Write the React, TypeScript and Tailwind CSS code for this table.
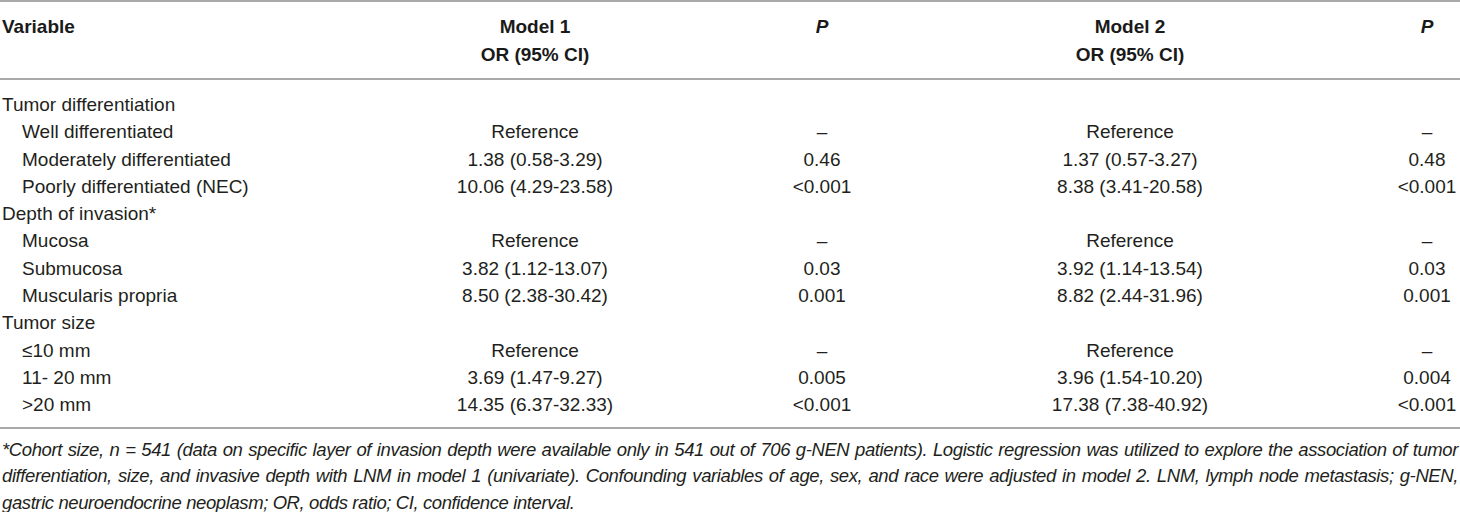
const rows: { label: string; indent?: boolean; m1?: string; p1?: string; m2?: string; p2?: string }[] = [
  { label: "Tumor differentiation" },
  { label: "Well differentiated", indent: true, m1: "Reference", p1: "–", m2: "Reference", p2: "–" },
  { label: "Moderately differentiated", indent: true, m1: "1.38 (0.58-3.29)", p1: "0.46", m2: "1.37 (0.57-3.27)", p2: "0.48" },
  { label: "Poorly differentiated (NEC)", indent: true, m1: "10.06 (4.29-23.58)", p1: "<0.001", m2: "8.38 (3.41-20.58)", p2: "<0.001" },
  { label: "Depth of invasion*" },
  { label: "Mucosa", indent: true, m1: "Reference", p1: "–", m2: "Reference", p2: "–" },
  { label: "Submucosa", indent: true, m1: "3.82 (1.12-13.07)", p1: "0.03", m2: "3.92 (1.14-13.54)", p2: "0.03" },
  { label: "Muscularis propria", indent: true, m1: "8.50 (2.38-30.42)", p1: "0.001", m2: "8.82 (2.44-31.96)", p2: "0.001" },
  { label: "Tumor size" },
  { label: "≤10 mm", indent: true, m1: "Reference", p1: "–", m2: "Reference", p2: "–" },
  { label: "11- 20 mm", indent: true, m1: "3.69 (1.47-9.27)", p1: "0.005", m2: "3.96 (1.54-10.20)", p2: "0.004" },
  { label: ">20 mm", indent: true, m1: "14.35 (6.37-32.33)", p1: "<0.001", m2: "17.38 (7.38-40.92)", p2: "<0.001" },
];

const cols = "grid grid-cols-[390px_290px_284px_332px_164px]";

export default function App() {
  return (
    <div className="w-[1460px] h-[512px] overflow-hidden bg-white text-[#231f20] font-['Liberation_Sans',Arial,sans-serif] text-[19px]">
      <div className="border-t-2 border-[#a9a9a9]">
        {/* header */}
        <div className={`${cols} pt-[11px] pb-[9px] leading-[28px] font-bold text-[#1a1a1a]`}>
          <div className="pl-[2px]">Variable</div>
          <div className="text-center">
            Model 1<br />OR (95% CI)
          </div>
          <div className="text-center italic">P</div>
          <div className="text-center">
            Model 2<br />OR (95% CI)
          </div>
          <div className="pl-[98px] text-center italic">P</div>
        </div>

        {/* body */}
        <div className="border-t-2 border-[#a9a9a9] pt-[11px] pb-[8px]">
          {rows.map((r) => (
            <div key={r.label} className={`${cols} h-[27.3px] leading-[27.3px]`}>
              <div className={r.indent ? "pl-[22px]" : "pl-[2px]"}>{r.label}</div>
              <div className="text-center">{r.m1}</div>
              <div className="text-center">{r.p1}</div>
              <div className="text-center">{r.m2}</div>
              <div className="pl-[98px] text-center whitespace-nowrap">{r.p2}</div>
            </div>
          ))}
        </div>

        {/* footnote */}
        <div className="border-t-2 border-[#a9a9a9] pt-[8px] px-[2px] italic leading-[26.5px] text-[18.5px] tracking-[-0.4px]">
          <p className="text-justify [text-align-last:justify]">
            *Cohort size, n = 541 (data on specific layer of invasion depth were available only in 541 out of 706 g-NEN patients). Logistic regression was utilized to explore the association of tumor
          </p>
          <p className="text-justify [text-align-last:justify]">
            differentiation, size, and invasive depth with LNM in model 1 (univariate). Confounding variables of age, sex, and race were adjusted in model 2. LNM, lymph node metastasis; g-NEN,
          </p>
          <p>gastric neuroendocrine neoplasm; OR, odds ratio; CI, confidence interval.</p>
        </div>
      </div>
    </div>
  );
}
